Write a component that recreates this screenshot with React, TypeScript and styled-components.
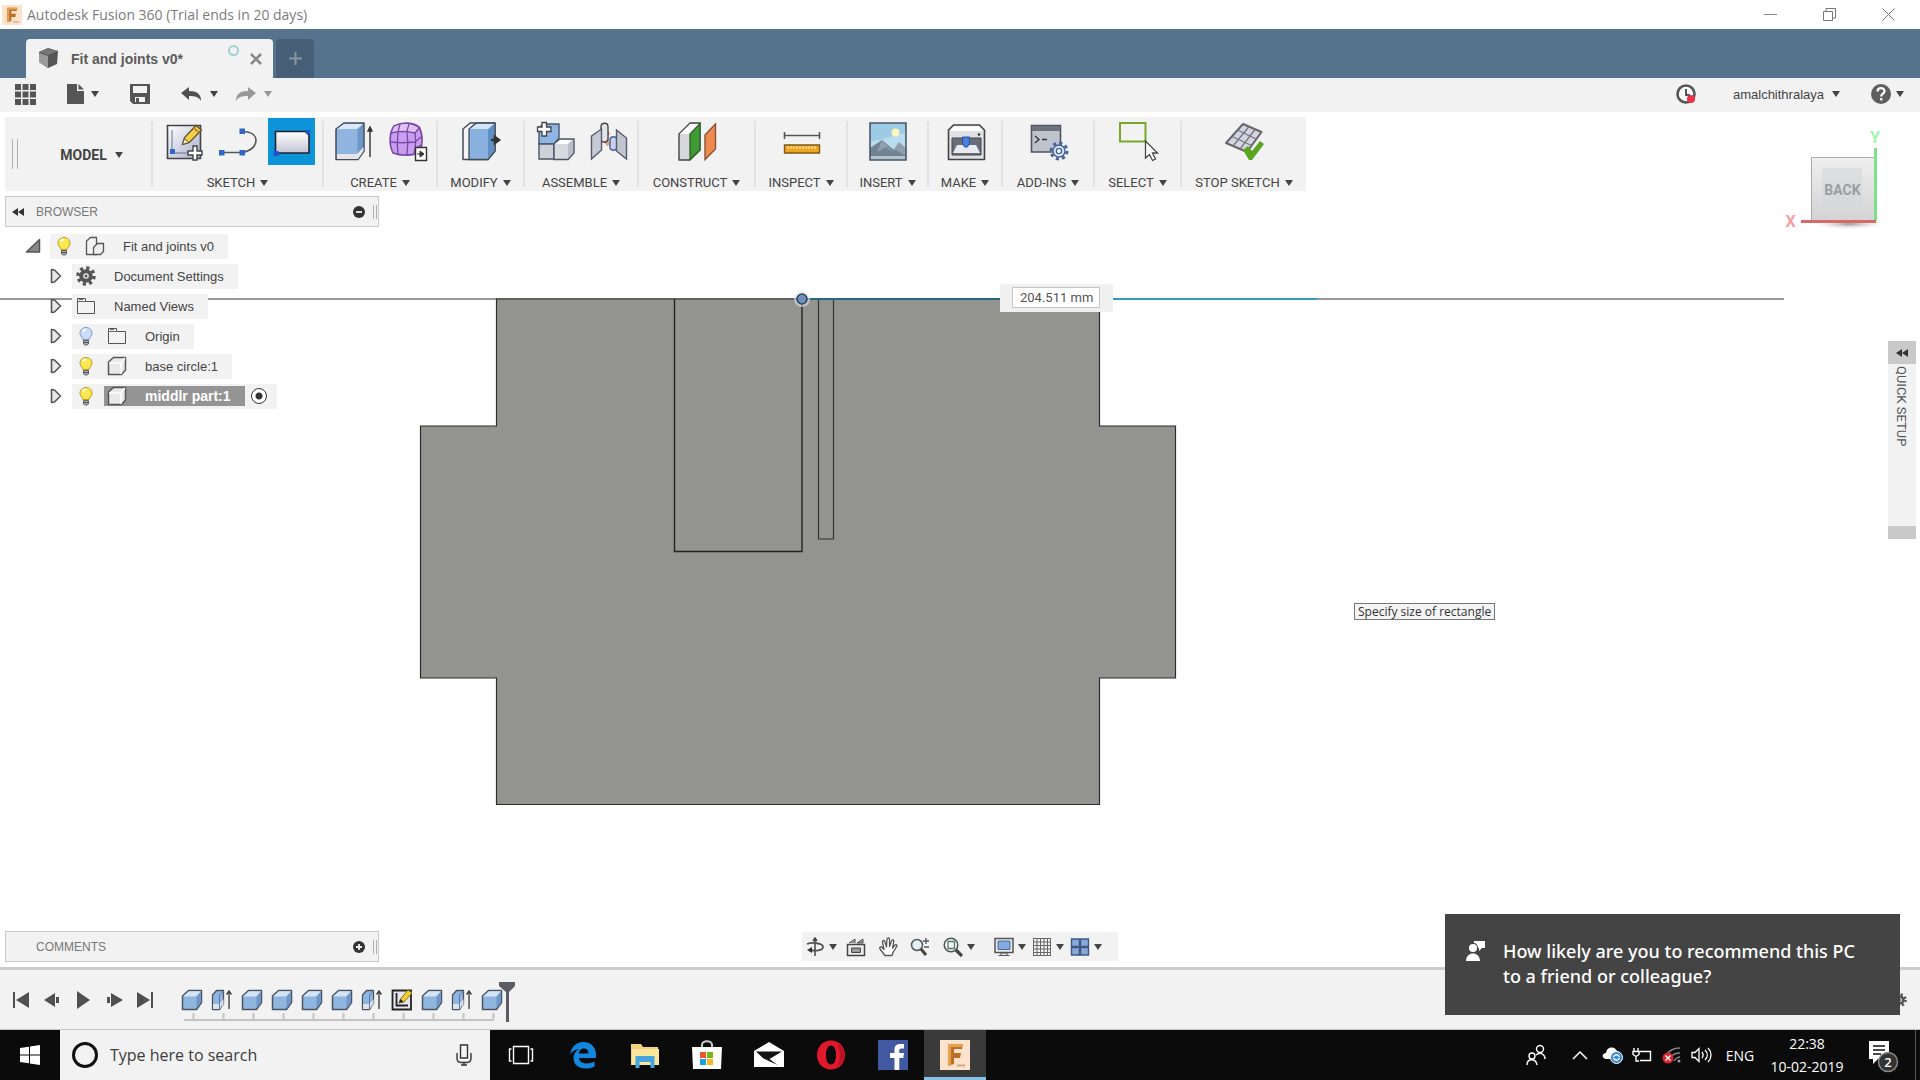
import React from "react";
import styled, { createGlobalStyle, css } from "styled-components";

const ui = `"Liberation Sans", Arial, sans-serif`;
const narrow = `Roboto, "Liberation Sans", sans-serif`;
const system = `"Open Sans", "Noto Sans", sans-serif`;

const Global = createGlobalStyle`
  *, *::before, *::after { box-sizing: border-box; }
  body { margin: 0; background: #fff; font-family: ${ui}; font-size: 13px; color: #444; }
  button, input { font: inherit; color: inherit; }
  ul { list-style: none; margin: 0; padding: 0; }
  svg { display: block; flex: none; }
`;

const Shell = styled.div`
  display: flex;
  flex-direction: column;
  min-height: 100vh;
  position: relative;
  overflow: hidden;
`;

const Plain = styled.button`
  display: flex;
  align-items: center;
  justify-content: center;
  border: 0;
  padding: 0;
  background: none;
  flex: none;
  cursor: pointer;
`;

/* ---------- window frame ---------- */
const TitleBar = styled.header`
  display: flex;
  align-items: center;
  height: 29px;
  padding-left: 2px;
  gap: 5px;
  background: #fff;
  font-family: ${system};
  color: #7c7c7c;
`;
const TitleText = styled.h1`
  margin: 0;
  flex: 1;
  font-size: 14px;
  font-weight: 400;
`;
const WindowButton = styled(Plain)`
  width: 59px;
  height: 28px;
`;
const WindowButtons = styled.div`
  display: flex;
  padding-right: 2px;
`;

const TabBar = styled.nav`
  display: flex;
  align-items: flex-end;
  gap: 3px;
  height: 49px;
  padding-left: 26px;
  background: #55738c;
`;
const Tab = styled.div`
  display: flex;
  align-items: center;
  width: 247px;
  height: 39px;
  padding: 0 10px 0 12px;
  border-radius: 4px 4px 0 0;
  background: #f2f2f2;
`;
const TabName = styled.span`
  flex: 1;
  padding-left: 12px;
  font-size: 14px;
  font-weight: 700;
  color: #5b5b5b;
`;
const SyncDot = styled.span`
  width: 11px;
  height: 11px;
  margin: 0 10px 16px 0;
  border: 2px solid #9fd3d3;
  border-radius: 50%;
`;
const NewTab = styled(Plain)`
  width: 38px;
  height: 39px;
  border-radius: 4px 4px 0 0;
  background: #465f76;
`;

const QuickBar = styled.div`
  display: flex;
  align-items: center;
  height: 34px;
  padding: 0 16px 2px 15px;
  background: #f2f2f2;
`;
const QuickItem = styled(Plain)<{ $gap: number; $inner?: number }>`
  gap: ${(p) => p.$inner ?? 8}px;
  margin-right: ${(p) => p.$gap}px;
  font-size: 13px;
  color: #444;
`;
const Spacer = styled.span`
  flex: 1;
`;

/* ---------- workspace ---------- */
const Workspace = styled.main`
  position: relative;
  display: flex;
  flex: 1;
  flex-direction: column;
  align-items: flex-start;
  padding: 5px;
`;
const Model = styled.svg`
  position: absolute;
  left: 0;
  top: 0;
`;
const Ribbon = styled.div`
  position: relative;
  display: flex;
  height: 74px;
  background: #f2f2f2;
  font-family: ${narrow};
  font-size: 13px;
`;
const ribbonDivider = css`
  &::after {
    content: "";
    width: 2px;
    height: 66px;
    margin: 4px 0;
    background: #e2e2e2;
  }
`;
const ModelSwitch = styled.div`
  display: flex;
  width: 148px;
  align-items: center;
  padding-left: 7px;
  ${ribbonDivider}
`;
const ModelButton = styled(Plain)`
  flex: 1;
  gap: 8px;
  padding: 2px 0 0 14px;
  font-size: 14px;
  font-weight: 700;
`;
const Grip = styled.span<{ $height: number; $gap: number }>`
  width: ${(p) => p.$gap + 2}px;
  height: ${(p) => p.$height}px;
  border: solid #b0b0b0;
  border-width: 0 1px;
`;
const Group = styled.section<{ $width: number }>`
  display: flex;
  width: ${(p) => p.$width}px;
  &:not(:last-child) {
    ${ribbonDivider}
  }
`;
const GroupBody = styled.div`
  display: flex;
  flex: 1;
  flex-direction: column;
  align-items: center;
  gap: 10px;
  padding-top: 1px;
`;
const Tools = styled.div`
  display: flex;
  gap: 7px;
`;
const Tool = styled(Plain)<{ $active?: boolean }>`
  width: 47px;
  height: 47px;
  background: ${(p) => (p.$active ? "#0d94d8" : "transparent")};
`;
const GroupLabel = styled(Plain)`
  gap: 5px;
  white-space: nowrap;
  line-height: 16px;
`;

const PanelBar = styled.div<{ $top?: number }>`
  position: relative;
  display: flex;
  align-items: center;
  width: 374px;
  height: 31px;
  margin-top: ${(p) => p.$top ?? 0}px;
  padding: 0 1px 0 6px;
  border: 1px solid #c9c9c9;
  background: #f2f2f2;
  color: #777;
`;
const PanelName = styled.h2`
  flex: 1;
  margin: 0 0 0 12px;
  font-size: 12px;
  font-weight: 400;
`;
const PanelSlot = styled.span`
  display: flex;
  width: 12px;
`;
const PanelToggle = styled(Plain)`
  margin-right: 8px;
`;

const Tree = styled.ul`
  position: relative;
  padding-top: 4px;
`;
const Row = styled.li<{ $level: number }>`
  display: flex;
  align-items: center;
  gap: ${(p) => (p.$level ? 10 : 9)}px;
  height: 30px;
  padding-left: ${(p) => (p.$level ? 45 : 20)}px;
`;
const RowBox = styled.div`
  display: flex;
  align-items: center;
  height: 25px;
  background: #f2f2f2;
`;
const RowIcon = styled(Plain)`
  width: 28px;
  height: 25px;
`;
const Entry = styled.button<{ $selected?: boolean; $start: number }>`
  display: flex;
  align-items: center;
  gap: 18px;
  height: ${(p) => (p.$selected ? 20 : 25)}px;
  margin-left: ${(p) => (p.$selected ? 4 : 0)}px;
  padding: 0 14px 0 ${(p) => (p.$selected ? 3 : p.$start)}px;
  border: 0;
  background: ${(p) => (p.$selected ? "#949494" : "transparent")};
  color: ${(p) => (p.$selected ? "#fff" : "#444")};
  font-size: ${(p) => (p.$selected ? 14 : 13)}px;
  font-weight: ${(p) => (p.$selected ? 700 : 400)};
  white-space: nowrap;
`;
const Activate = styled.input`
  appearance: none;
  width: 16px;
  height: 16px;
  margin: 0 10px 0 6px;
  border: 1px solid #333;
  border-radius: 50%;
  background: radial-gradient(circle, #333 0 3px, #fff 4px);
`;

const BottomRow = styled.div`
  position: relative;
  display: grid;
  grid-template-columns: 1fr auto 1fr;
  align-items: center;
  width: 100%;
  margin-top: auto;
`;
const NavBar = styled.div`
  display: flex;
  align-items: center;
  height: 29px;
  padding: 0 13px 0 3px;
  background: #f2f2f2;
`;
const NavTool = styled(Plain)<{ $width: number }>`
  width: ${(p) => p.$width}px;
  height: 29px;
  justify-content: flex-start;
  gap: 4px;
`;

/* Widgets that float over the drawing */
const Dimension = styled.label`
  position: absolute;
  left: 1000px;
  top: 172px;
  display: flex;
  padding: 3px 13px 4px 12px;
  background: #f0f0f0;
`;
const DimensionInput = styled.input`
  width: 88px;
  height: 21px;
  padding: 0 0 0 7px;
  border: 1px solid #c4c4c4;
  background: #fff;
  font-family: ${narrow};
  font-size: 13px;
  color: #555;
`;
const Hint = styled.div`
  position: absolute;
  left: 1354px;
  top: 491px;
  height: 17px;
  padding: 0 3px;
  border: 1px solid #777;
  background: #f4f4f4;
  font-family: ${system};
  font-size: 12px;
  line-height: 15px;
  color: #333;
  white-space: nowrap;
`;
const Cube = styled(Plain)`
  position: absolute;
  right: 30px;
  top: 12px;
`;
const QuickSetup = styled.aside`
  position: absolute;
  right: 4px;
  top: 229px;
  display: flex;
  flex-direction: column;
  width: 28px;
  height: 198px;
  border-bottom: 13px solid #c9c9c9;
  background: #f2f2f2;
  font-family: ${narrow};
  font-size: 13px;
  color: #555;
`;
const QuickToggle = styled(Plain)`
  width: 28px;
  height: 23px;
  background: #c9c9c9;
`;
const QuickText = styled.span`
  writing-mode: vertical-rl;
  align-self: center;
  padding: 2px 2px 0 0;
`;

/* ---------- timeline ---------- */
const Timeline = styled.footer`
  display: flex;
  align-items: flex-start;
  height: 63px;
  padding: 0 13px 0 5px;
  border-top: 3px solid #cdcdcd;
  border-bottom: 1px solid #c4c4c4;
  background: #f2f2f2;
`;
const Play = styled(Plain)`
  width: 31px;
  height: 60px;
`;
const Track = styled.div`
  position: relative;
  margin: 16px 0 0 17px;
`;
const Features = styled.div`
  display: flex;
`;
const Feature = styled(Plain)`
  width: 30px;
  height: 27px;
`;
const Marker = styled.svg`
  position: absolute;
  left: 321px;
  top: -4px;
`;
const TimelineSettings = styled(Plain)`
  height: 60px;
`;

/* ---------- taskbar ---------- */
const TaskBar = styled.nav`
  display: flex;
  height: 50px;
  background: #0b0b0b;
  font-family: ${system};
  color: #fff;
`;
const Start = styled(Plain)`
  width: 60px;
`;
const Search = styled.label`
  display: flex;
  align-items: center;
  gap: 11px;
  width: 430px;
  padding: 0 18px 0 11px;
  background: #f2f2f2;
`;
const SearchInput = styled.input`
  flex: 1;
  min-width: 0;
  padding: 0;
  border: 0;
  outline: 0;
  background: none;
  font-size: 16px;
  &::placeholder {
    color: #3c3c3c;
    opacity: 1;
  }
`;
const Task = styled(Plain)<{ $open?: boolean }>`
  width: 62px;
  ${(p) => p.$open && "background: #3a3a3a; box-shadow: inset 0 -3px #83c4ee;"}
`;
const Tray = styled.div`
  display: flex;
  align-items: center;
  margin-left: auto;
  border-right: 1px solid #555;
  margin-right: 4px;
`;
const TrayItem = styled(Plain)<{ $width: number }>`
  width: ${(p) => p.$width}px;
  height: 50px;
  color: #fff;
  font-size: 14px;
`;
const Clock = styled.time`
  width: 92px;
  font-size: 14px;
  line-height: 23px;
  text-align: center;
`;

const Toast = styled.aside`
  position: absolute;
  right: 20px;
  bottom: 65px;
  display: flex;
  align-items: flex-start;
  gap: 16px;
  width: 455px;
  height: 101px;
  padding: 25px 20px;
  background: #444;
  color: #fff;
  font-family: "Noto Sans", "Open Sans", sans-serif;
  line-height: 25px;
`;
const ToastText = styled.p`
  margin: 0;
  font-size: 18px;
  font-weight: 500;
  white-space: nowrap;
`;

/* ---------- icons ---------- */
const Caret = ({ color = "#444" }: { color?: string }) => (
  <svg width="8" height="6" viewBox="0 0 8 6" aria-hidden>
    <path d="M0 0h8L4 6z" fill={color} />
  </svg>
);

type Art = React.ReactNode;
const Svg = ({ w, h = w, children }: { w: number; h?: number; children: Art }) => (
  <svg width={w} height={h} viewBox={`0 0 ${w} ${h}`} fill="none" aria-hidden>
    {children}
  </svg>
);

const FusionLogo = ({ size }: { size: number }) => (
  <svg width={size} height={size} viewBox="0 0 30 30" aria-hidden>
    <path fill="#fde3cb" d="M0 0h30v30H0z" />
    <path fill="#b96f24" d="M8 4h15l-1 5h-8v4h7l-1 5h-6v6l-6 2z" />
    <path fill="#e8a050" d="M8 4h15l-1 3H11v18l-3 1z" />
    <path stroke="#c9a98a" strokeWidth="2" d="M17 25.500h8" />
  </svg>
);

const Bulb = ({ off }: { off?: boolean }) => (
  <Svg w={16} h={20}>
    <path
      d="M8 1.500c-3.600 0-6 2.500-6 5.500 0 2.400 1.500 3.600 2.700 5.500v1h6.600v-1C12.500 10.600 14 9.400 14 7c0-3-2.400-5.500-6-5.500z"
      fill={off ? "#c9dcf8" : "#fbe84e"}
      stroke={off ? "#8298c4" : "#b89a2a"}
    />
    <path d="M5 5.500c.6-1.400 1.800-2 3-2" stroke="#fff" strokeWidth="2" />
    <path d="M5.500 14.500h5v3.500l-1.500 1h-2l-1.500-1z" fill="#aaa" stroke="#666" />
    <path d="M5 16.500h6" stroke="#555" />
  </Svg>
);
const Folder = () => (
  <Svg w={20} h={18}>
    <path d="M1.500 16.500v-15h8v3h9v12z" fill="#f3f3f3" stroke="#555" />
    <path d="M1.500 4.500h8M3 2.500h4" stroke="#666" />
  </Svg>
);
const Body = () => (
  <Svg w={20}>
    <path d="M1.500 6l5-4.500h12V14l-4 4.500h-13z" fill="#e9e9e9" stroke="#555" strokeWidth="1.500" strokeLinejoin="round" />
    <path d="M2 7h12l4-5M14 7v11" stroke="#fff" strokeWidth="1.500" />
  </Svg>
);
const Assembly = () => (
  <Svg w={20}>
    <path d="M1.500 5l4-3.500h6V18.500h-10z" fill="#f3f3f3" stroke="#555" strokeWidth="1.300" strokeLinejoin="round" />
    <path d="M8.500 11.500l4-4h6v8l-3 3h-7z" fill="#eee" stroke="#555" strokeWidth="1.300" strokeLinejoin="round" />
  </Svg>
);
const Gear = ({ size = 20, color = "#555" }: { size?: number; color?: string }) => (
  <svg width={size} height={size} viewBox="0 0 20 20" fill="none" aria-hidden>
    <circle cx="10" cy="10" r="8" stroke={color} strokeWidth="3.500" strokeDasharray="3.140 3.140" />
    <circle cx="10" cy="10" r="4.800" stroke={color} strokeWidth="4" />
    <circle cx="10" cy="10" r="1.500" fill={color} />
  </svg>
);
const Closed = () => (
  <Svg w={12} h={16}>
    <path d="M1.500 1.500v13l3-.5 6-6-6-6z" fill="#e8e8e8" stroke="#555" strokeWidth="1.600" strokeLinejoin="round" />
  </Svg>
);
const Opened = () => (
  <Svg w={16}>
    <path d="M14.500 1.500v12.500H1.500z" fill="#888" stroke="#555" strokeWidth="1.500" strokeLinejoin="round" />
  </Svg>
);
const Rewind = () => (
  <Svg w={12} h={8}>
    <path d="M6 0v8L0 4zM12 0v8L6 4z" fill="#333" />
  </Svg>
);
const Round = ({ plus }: { plus?: boolean }) => (
  <Svg w={12}>
    <circle cx="6" cy="6" r="6" fill="#333" />
    <path d={plus ? "M3 6h6M6 3v6" : "M3 6h6"} stroke="#f2f2f2" strokeWidth="1.800" />
  </Svg>
);

const Box = () => (
  <Svg w={22}>
    <path d="M1.500 7l6-5.500h13v12l-5 7h-14z" fill="#8fb6de" stroke="#4b5363" strokeWidth="1.500" strokeLinejoin="round" />
    <path d="M2 7.500l6-5.300h12l-4.500 5.300z" fill="#d5e4f5" />
    <path d="M15.500 7.500l4.500-5v11l-4.500 6z" fill="#6f98c8" />
  </Svg>
);
const ExtrudeSmall = () => (
  <Svg w={22}>
    <path d="M1.500 6l4-4.500h7v13l-4 6h-7z" fill="#8fb6de" stroke="#4b5363" strokeWidth="1.300" strokeLinejoin="round" />
    <path d="M2 15h6.500l4-5v5l-4 5H2z" fill="#dde3ea" />
    <path d="M8.500 6v14M8.500 6l4-4" stroke="#5c7ba6" />
    <path d="M18 20V3M15.500 5.500L18 2l2.500 3.500" stroke="#444" strokeWidth="1.400" />
  </Svg>
);
const SketchSmall = () => (
  <Svg w={22}>
    <path d="M1.500 1.500h18.500v19H1.500z" fill="#e4e7f2" stroke="#222" strokeWidth="1.800" />
    <path d="M5.500 4v12.500H17" stroke="#222" strokeWidth="1.800" />
    <path d="M8 14l1.500-4L17 1l4 3-8 9z" fill="#f4cf2c" stroke="#8a6d1a" />
    <path d="M8 14l1.500-4 3 2.500z" fill="#222" />
  </Svg>
);

const tools: Record<string, Art> = {
  newSketch: (
    <>
      <defs>
        <linearGradient id="page" x1="0" y1="0" x2="1" y2="1">
          <stop stopColor="#fff" />
          <stop offset="1" stopColor="#a9aecb" />
        </linearGradient>
      </defs>
      <path d="M7.500 7.500h33v33h-33z" fill="url(#page)" stroke="#444" strokeWidth="1.600" />
      <path d="M12 12v21M14 35h14" stroke="#8a90a8" strokeWidth="1.300" />
      <path d="M10 31h5v5h-5z" fill="#2f66c8" />
      <path d="M22.500 26.500l2-7L36 7.500l5.500 4.500-12 12.500z" fill="#f2cf45" stroke="#5f5330" strokeWidth="1.300" />
      <path d="M33.500 10l5.500 4.500" stroke="#c7863c" strokeWidth="2" />
      <path d="M22.500 26.500l2-6 4.500 4z" fill="#f5e6c8" stroke="#5f5330" />
      <path d="M33 28h4v5h5v4h-5v5h-4v-5h-5v-4h5z" fill="#fff" stroke="#444" strokeWidth="1.400" />
    </>
  ),
  line: (
    <>
      <path d="M8 34.500h20c8-1 14-6 14-12s-6-9-14-9" stroke="#555" strokeWidth="1.700" />
      <path d="M5 32h5.500v5.500H5zM25.500 32H31v5.500h-5.500zM25.500 10.500H31V16h-5.500z" fill="#2f66c8" />
    </>
  ),
  rectangle: (
    <>
      <defs>
        <linearGradient id="rect" x2="0" y2="1">
          <stop stopColor="#fff" />
          <stop offset="1" stopColor="#c3c4d2" />
        </linearGradient>
      </defs>
      <path d="M7.500 13.500h30l3.500 3.500v18H7.500z" fill="url(#rect)" stroke="#223" strokeWidth="1.600" />
      <path d="M38 12h4v4h-4zM5.500 33h5v5h-5z" fill="#1e55d6" />
    </>
  ),
  extrude: (
    <>
      <path d="M6 11l8-6h20v28l-6 8.500H6z" fill="#8fb5df" stroke="#444b58" strokeWidth="1.500" strokeLinejoin="round" />
      <path d="M7 11l7-5h19l-6 5z" fill="#d9e8f8" />
      <path d="M27.500 11.500L33 6v27l-5.500 7z" fill="#6c97c9" />
      <path d="M7 36h20l6.500-7v4L28 41H7z" fill="#e4e6ea" />
      <path d="M40 39V11M38 13l2-4 2 4z" stroke="#333" strokeWidth="1.400" fill="#333" />
    </>
  ),
  form: (
    <>
      <path d="M10 8c8-4 18-4 25 1 4 7 4 17 1 25-7 4-19 4-27 1-4-8-4-20 1-27z" fill="#c99df0" stroke="#7a48a4" strokeWidth="1.600" />
      <path d="M10 9c7-4 16-4 24 1l-3 5c-8-2-15-2-23 0z" fill="#e0c2f5" />
      <path d="M7 15c8-2 16-2 24 0l5-6M6 24c8 1 16 1 25 0l6-5M31 15c1 8 1 14-1 21M23 13c1 8 1 16 0 24M14 14c-1 8-1 15 0 23M16 6l-2 8M25 6l-2 7M31 31l6-4" stroke="#7a48a4" strokeWidth="1.300" />
      <path d="M31.500 29.500h11v13h-11z" fill="#fff" stroke="#333" strokeWidth="1.400" />
      <path d="M33 36h4M36 33l4 3-4 3z" fill="#333" stroke="#333" />
    </>
  ),
  pressPull: (
    <>
      <path d="M6 11l7-6h25v28l-7 8.500H6z" fill="#f5f5f7" stroke="#444b58" strokeWidth="1.500" strokeLinejoin="round" />
      <path d="M12 11l7-6h19v28l-7 8.500H12z" fill="#8ab2e0" stroke="#444b58" strokeWidth="1.300" strokeLinejoin="round" />
      <path d="M13 11l7-5h17l-6 5z" fill="#d1e3f7" />
      <path d="M31 11.500L37 6v27l-6 7z" fill="#5f8fc6" />
      <path d="M34 22h5M38 19l4 3-4 3z" fill="#333" stroke="#333" strokeWidth="2.500" />
    </>
  ),
  component: (
    <>
      <path d="M8 10l4-4h16v14l-5 6H8z" fill="#8fb5e6" stroke="#4c5566" strokeWidth="1.400" />
      <path d="M8 26h15v15H8z" fill="#cfd1d8" stroke="#4c5566" strokeWidth="1.400" />
      <path d="M23 26l6-5h14v14l-6 6.500H23z" fill="#d7dae0" stroke="#4c5566" strokeWidth="1.400" />
      <path d="M24 26l5-4h12l-4 4z" fill="#fff" />
      <path d="M37 26v14l5-6V22z" fill="#b9bdc8" />
      <path d="M11 4.500h4.500V9H20v4.500h-4.500V18H11v-4.500H6.500V9H11z" fill="#fff" stroke="#444" strokeWidth="1.300" />
    </>
  ),
  joint: (
    <>
      <path d="M24 14c-4 3-4 10 0 13" stroke="#e9a37c" strokeWidth="4" />
      <path d="M16 9c0-5 7-5 7 0v13c-2 3-6 3-7 0z" fill="#e3e5ea" stroke="#444" strokeWidth="1.400" />
      <path d="M6.500 18l10-7v21l-10 9z" fill="#c7cbd6" stroke="#555b68" strokeWidth="1.400" />
      <path d="M25 21c1-3 6-3 7 0v9c-1 3-6 3-7 0z" fill="#c7d0ef" stroke="#4f5c9a" strokeWidth="1.400" />
      <path d="M31.500 12l10 8v21l-10-8z" fill="#c0c5d1" stroke="#555b68" strokeWidth="1.400" />
    </>
  ),
  plane: (
    <>
      <path d="M6 16L17 5h10v27l-10 10H6z" fill="#d6d7da" stroke="#444" strokeWidth="1.400" strokeLinejoin="round" />
      <path d="M7 16L17 6h9l-9 10z" fill="#fff" />
      <path d="M17 16L27 5.500V32L17 41.500z" fill="#3e9a33" stroke="#2b6425" strokeWidth="1.300" />
      <path d="M32 17L42.500 6v25L32 41.500z" fill="#ee8a4e" stroke="#8a5334" strokeWidth="1.400" />
    </>
  ),
  measure: (
    <>
      <path d="M6.500 17.500h35M6.500 14v7M41.500 14v7" stroke="#555" strokeWidth="1.600" />
      <path d="M6.500 27h35v8h-35z" fill="#f0a51e" stroke="#7d5a1a" strokeWidth="1.400" />
      <path d="M10 31v-3M13 31v-3M16 31v-3M19 31v-3M22 31v-3M25 31v-3M28 31v-3M31 31v-3M34 31v-3M37 31v-3" stroke="#fbe39a" strokeWidth="1.300" />
    </>
  ),
  decal: (
    <>
      <path d="M6 5h36v37H6z" fill="#b9dcee" />
      <path d="M6 5h36v10L6 24z" fill="#9dcbe6" />
      <circle cx="31.500" cy="14.500" r="4" fill="#fdf7bd" />
      <path d="M6 30l12-8 12 10 5-4 7 7v7H6z" fill="#728493" />
      <path d="M18 22l-5 12 9-5 8 6-12-13zM30 31l5-7 7 6v8z" fill="#8fa1ad" />
      <path d="M6 38h36v4H6z" fill="#b6c3c9" />
      <path d="M6 5h36v37H6z" stroke="#4a5a68" strokeWidth="1.600" />
    </>
  ),
  print: (
    <>
      <path d="M6.500 12l5-5h26l5 5v29.500h-36z" fill="#e0e1e4" stroke="#444" strokeWidth="1.600" strokeLinejoin="round" />
      <path d="M8 13l4-4.500h25l4 4.500z" fill="#fff" />
      <circle cx="37" cy="16.500" r="1.300" fill="#333" />
      <path d="M10 20h29v17H10z" fill="#6a6e79" stroke="#444" />
      <path d="M15 27h19l4 8H11z" fill="#e9ebf2" />
      <path d="M20.500 19h7v6l-2 4h-3l-2-4z" fill="#4b7fe0" stroke="#2d4f9e" />
    </>
  ),
  script: (
    <>
      <path d="M6.500 7.500h29V34h-29z" fill="#bfc3cd" stroke="#50545e" strokeWidth="1.600" />
      <path d="M7 8h28v5H7z" fill="#6d717c" />
      <path d="M10 18l4 3.500-4 3.500M17 21.500h5" stroke="#333" strokeWidth="1.400" />
      <circle cx="34" cy="33" r="8" stroke="#44629c" strokeWidth="3" strokeDasharray="3.140 3.140" />
      <circle cx="34" cy="33" r="6" fill="#dbe7fa" stroke="#44629c" strokeWidth="1.400" />
      <circle cx="34" cy="33" r="2.600" fill="#fff" stroke="#44629c" strokeWidth="1.400" />
    </>
  ),
  select: (
    <>
      <path d="M6 5h25.500v18.500H6z" stroke="#77a82c" strokeWidth="2" />
      <path d="M31.500 23v17l4-3.500 3 6 3-1.500-3-6h5z" fill="#fff" stroke="#444" strokeWidth="1.300" />
    </>
  ),
  stop: (
    <>
      <path d="M22 6l18.500 8L26 34 5 25z" fill="#d5d3e6" stroke="#666" strokeWidth="2" strokeLinejoin="round" />
      <path d="M16.500 12l18.500 9M11 18.500l19.500 9M28 8.500L12 28M34 11.500L19 31" stroke="#777" strokeWidth="1.300" />
      <path d="M22 32l5-4 4 5 8-10 4 3-12 16h-3z" fill="#5aa51f" />
    </>
  ),
};

const groups: { label: string; width: number; tools: [string, string][] }[] = [
  { label: "SKETCH", width: 171, tools: [["newSketch", "Create Sketch"], ["line", "Line"], ["rectangle", "Rectangle"]] },
  { label: "CREATE", width: 114, tools: [["extrude", "Extrude"], ["form", "Create Form"]] },
  { label: "MODIFY", width: 87, tools: [["pressPull", "Press Pull"]] },
  { label: "ASSEMBLE", width: 114, tools: [["component", "New Component"], ["joint", "Joint"]] },
  { label: "CONSTRUCT", width: 117, tools: [["plane", "Offset Plane"]] },
  { label: "INSPECT", width: 92, tools: [["measure", "Measure"]] },
  { label: "INSERT", width: 81, tools: [["decal", "Decal"]] },
  { label: "MAKE", width: 74, tools: [["print", "3D Print"]] },
  { label: "ADD-INS", width: 92, tools: [["script", "Scripts and Add-Ins"]] },
  { label: "SELECT", width: 87, tools: [["select", "Select"]] },
  { label: "STOP SKETCH", width: 124, tools: [["stop", "Stop Sketch"]] },
];

const nodes: { name: string; bulb?: "on" | "off"; icon: Art; selected?: boolean }[] = [
  { name: "Document Settings", icon: <Gear /> },
  { name: "Named Views", icon: <Folder /> },
  { name: "Origin", bulb: "off", icon: <Folder /> },
  { name: "base circle:1", bulb: "on", icon: <Body /> },
  { name: "middlr part:1", bulb: "on", icon: <Body />, selected: true },
];

const navTools: { name: string; width: number; caret?: boolean; art: Art }[] = [
  {
    name: "Orbit", width: 41, caret: true,
    art: <><path d="M10 1v18M8 4l2-3 2 3" stroke="#444" strokeWidth="1.500" /><path d="M2 7c5-2 16-1 16 3s-8 4-14 3" stroke="#555" strokeWidth="1.800" /><path d="M2 13l5-3v6z" fill="#333" /></>,
  },
  {
    name: "Look At", width: 32,
    art: <><path d="M1.500 7.500h17v11h-17z" fill="#eee" stroke="#444" strokeWidth="1.500" /><path d="M5.500 11h9v4.500h-9z" fill="#999" stroke="#444" /><path d="M3 6l6-4v4M11 6l6-4v4z" stroke="#555" fill="#999" /></>,
  },
  {
    name: "Pan", width: 32,
    art: <path d="M7 18.500L2 12c-1-2 1-3 2-1.500l2 2L4.500 5c0-2 2-2 2.500 0l1.500 5L9 2.500c0-2 2.500-2 2.500 0v7L13.500 4c.6-1.700 2.600-1.300 2.200.6L14.500 11l2.500-3c1-1 2.500 0 1.700 1.300L15 15.500l-1 3z" fill="#fff" stroke="#555" strokeWidth="1.300" strokeLinejoin="round" />,
  },
  {
    name: "Zoom", width: 33,
    art: <><circle cx="7" cy="8" r="5.500" fill="#e4eef5" stroke="#555" strokeWidth="1.500" /><path d="M11 12l5 6" stroke="#444" strokeWidth="3" /><path d="M13 4h6M16 1v6M14 10h5" stroke="#555" strokeWidth="1.300" /></>,
  },
  {
    name: "Fit", width: 51, caret: true,
    art: <><circle cx="8" cy="8" r="6.800" fill="#f4f4f4" stroke="#555" strokeWidth="1.500" /><path d="M5 4.500h6.500v7H5z" stroke="#4d7f6b" strokeWidth="1.300" /><path d="M13 13l6 6" stroke="#444" strokeWidth="3.200" /></>,
  },
  {
    name: "Display Settings", width: 38, caret: true,
    art: <><path d="M1 1.500h18v14H1z" fill="#eee" stroke="#555" strokeWidth="1.500" /><path d="M4 4h12v8.500H4z" fill="#84abdf" stroke="#4b6a98" /><path d="M7 16h6v2.500H7zM4.500 18.500h11" stroke="#555" /></>,
  },
  {
    name: "Grid and Snaps", width: 38, caret: true,
    art: <><path d="M1.500 1.500h17v17h-17z" fill="#f4f4f4" /><path d="M1.500 1v18M5 1v18M8.500 1v18M12 1v18M15.500 1v18M18.500 1v18M1 1.500h18M1 5h18M1 8.500h18M1 12h18M1 15.500h18M1 18.500h18" stroke="#666" /></>,
  },
  {
    name: "Viewports", width: 35, caret: true,
    art: <path d="M1.500 2h8v7.500h-8zM10.500 2h8v7.500h-8zM1.500 10.500h8V18h-8zM10.500 10.500h8V18h-8z" fill="#86a9dc" stroke="#3f5680" strokeWidth="1.400" />,
  },
];

const playback: [string, string][] = [
  ["Go to beginning", "M1 1h2v16H1zM17 1v16L4 9z"],
  ["Step back", "M12 2v14L1 9zM13 6h3v6h-3z"],
  ["Play", "M3 0l13 9L3 18z"],
  ["Step forward", "M6 2v14l12-7zM2 6h3v6H2z"],
  ["Go to end", "M15 1h2v16h-2zM1 1v16l13-8z"],
];
const features = "bebbbbesbeb".split("");

/* ---------- taskbar icons ---------- */
const taskApps: { name: string; open?: boolean; art: Art }[] = [
  { name: "Task View", art: <Svg w={26}><path d="M5.500 4.500h15v17h-15z" stroke="#fff" strokeWidth="1.400" /><path d="M3.500 7H1.500v12h2M22.500 7h2v12h-2" stroke="#fff" strokeWidth="1.400" /></Svg> },
  {
    name: "Edge",
    art: <Svg w={28}><path d="M1 13.500C2.500 5 8 1 14.500 1 22 1 27 6.500 27 13.500V17H10c.3 4 4 5.500 8 5.500 2.800 0 5.300-.8 7.500-2v5C23 27 20 27.500 17 27.500 9 27.500 4.500 23 4.500 17c0-4 2-7 5.500-9-4.500.5-7.500 2.700-9 5.500zM10 12.500h9.500c0-3-1.500-5-4.500-5s-5 2-5 5z" fill="#1187e0" /></Svg>,
  },
  {
    name: "File Explorer",
    art: <Svg w={28}><path d="M0 3h10l2 3h15v18H0z" fill="#f3d37a" /><path d="M1 8h27v16H1z" fill="#fbe79c" /><path d="M4.500 27V15h19v12h-4v-6h-11v6z" fill="#46a5dc" /></Svg>,
  },
  {
    name: "Microsoft Store",
    art: <Svg w={30}><path d="M10 9V5c0-5 10-5 10 0v4" stroke="#ccc" strokeWidth="2" /><path d="M0 7h30l-1 22H1z" fill="#fff" /><path d="M8 12h6v6H8z" fill="#e8562a" /><path d="M15 12h6v6h-6z" fill="#7cb518" /><path d="M8 19h6v6H8z" fill="#1a9de0" /><path d="M15 19h6v6h-6z" fill="#f5b81d" /></Svg>,
  },
  { name: "Mail", art: <Svg w={30} h={26}><path d="M0 9L15 0l15 9v16H0z" fill="#fff" /><path d="M2 9.500h26L15.500 17l8 6-14-6.500z" fill="#111" /></Svg> },
  {
    name: "Opera",
    art: <Svg w={30}><path d="M15 .5C6.500.5 1 7 1 15s5.500 14.500 14 14.500S29 23 29 15 23.500.5 15 .5zm0 5c3.500 0 5 4.500 5 9.500s-1.500 9.500-5 9.500-5-4.500-5-9.500 1.500-9.500 5-9.500z" fill="#e0182c" fillRule="evenodd" /><path d="M21 4c4 6 4 16 0 22 10-4 10-18 0-22z" fill="#b81224" /></Svg>,
  },
  {
    name: "Facebook",
    art: <Svg w={30}><path d="M0 0h30v30H0z" fill="#4159a0" /><path d="M16.500 30V18H12v-5h4.500V9.500c0-4 2.500-5.500 6-5.500H26v4.500h-2.500c-1.800 0-2.300.8-2.300 2.300V13H26l-.7 5h-4v12z" fill="#fff" /></Svg>,
  },
  { name: "Autodesk Fusion 360", open: true, art: <FusionLogo size={30} /> },
];

const trayIcons: { name: string; width: number; art: Art }[] = [
  { name: "People", width: 50, art: <Svg w={20} h={22}><circle cx="14" cy="5" r="3.500" stroke="#fff" strokeWidth="1.400" /><circle cx="6" cy="12" r="3" stroke="#fff" strokeWidth="1.400" /><path d="M1 21c0-7 9-7 10 0M10 11c5-4 9 0 9 4" stroke="#fff" strokeWidth="1.400" /></Svg> },
  { name: "Show hidden icons", width: 38, art: <Svg w={16} h={10}><path d="M1 9l7-7 7 7" stroke="#fff" strokeWidth="1.500" /></Svg> },
  { name: "OneDrive", width: 26, art: <Svg w={21} h={18}><path d="M4 13c-5-1-4-6 0-6 1-7 9-7 11-2 5 0 5 8 1 8z" fill="#fff" /><circle cx="14.500" cy="11.500" r="6" fill="#3b8bd8" stroke="#fff" /><path d="M11.500 11c1-3 5-3 6 0M17.500 12c-1 3-5 3-6 0" stroke="#fff" strokeWidth="1.300" /></Svg> },
  { name: "Power", width: 33, art: <Svg w={20} h={16}><path d="M6 4.500h12.500v9H8M2 1v3M6 1v3M1 4.500h6v3l-3 2-3-2zM4 9v5h3" stroke="#fff" strokeWidth="1.400" /></Svg> },
  { name: "Network unavailable", width: 27, art: <Svg w={20} h={18}><path d="M5 8C8 4 13 2 18 2M8 12c2-3 6-5 10-5M12 15c1-2 4-4 6-4" stroke="#888" strokeWidth="1.500" /><circle cx="17" cy="15" r="1.500" fill="#999" /><circle cx="6" cy="12" r="5.500" fill="#d8262e" /><path d="M3.500 9.500l5 5M8.500 9.500l-5 5" stroke="#fff" strokeWidth="1.400" /></Svg> },
  { name: "Volume", width: 34, art: <Svg w={22} h={18}><path d="M1 6.500h3l4-4v13l-4-4H1z" stroke="#fff" strokeWidth="1.300" /><path d="M11 6c1.500 2 1.500 4 0 6M14 4c3 3 3 7 0 10M17 2c4 4 4 10 0 14" stroke="#fff" strokeWidth="1.300" /></Svg> },
];

export default function App() {
  return (
    <Shell>
      <Global />
      <TitleBar>
        <FusionLogo size={20} />
        <TitleText>Autodesk Fusion 360 (Trial ends in 20 days)</TitleText>
        <WindowButtons>
          <WindowButton aria-label="Minimize"><Svg w={13}><path d="M0 6.500h13" stroke="#888" /></Svg></WindowButton>
          <WindowButton aria-label="Restore"><Svg w={13}><path d="M.5 3.500h9v9h-9zM3 3V.5h9.500V10H10" stroke="#777" /></Svg></WindowButton>
          <WindowButton aria-label="Close"><Svg w={13}><path d="M.5.5l12 12M12.500.5l-12 12" stroke="#777" /></Svg></WindowButton>
        </WindowButtons>
      </TitleBar>

      <TabBar>
        <Tab>
          <Svg w={21}>
            <path d="M1 4l9-4 10 3-1 13-9 4-9-6z" fill="#555" />
            <path d="M1 5l9 3v12l-9-6z" fill="#9b9b9b" />
            <path d="M1 4l9-3 10 2-10 4z" fill="#777" />
          </Svg>
          <TabName>Fit and joints v0*</TabName>
          <SyncDot />
          <Plain aria-label="Close tab"><Svg w={14}><path d="M2 2l10 10M12 2L2 12" stroke="#888" strokeWidth="2.600" /></Svg></Plain>
        </Tab>
        <NewTab aria-label="New tab"><Svg w={13}><path d="M6.500 0v13M0 6.500h13" stroke="#8797a6" strokeWidth="2" /></Svg></NewTab>
      </TabBar>

      <QuickBar>
        <QuickItem $gap={31} aria-label="Data panel">
          <Svg w={21}><path d="M0 0h6v6H0zM7.500 0h6v6h-6zM15 0h6v6h-6zM0 7.500h6v6H0zM7.500 7.500h6v6h-6zM15 7.500h6v6h-6zM0 15h6v6H0zM7.500 15h6v6h-6zM15 15h6v6h-6z" fill="#555" /></Svg>
        </QuickItem>
        <QuickItem $gap={31} $inner={7} aria-label="File">
          <Svg w={17} h={20}><path d="M0 0h10v7h7v13H0zM11.500 0L17 5.500h-5.500z" fill="#555" /></Svg>
          <Caret />
        </QuickItem>
        <QuickItem $gap={31} aria-label="Save">
          <Svg w={20}><path d="M0 0h20v20H3l-3-3z" fill="#555" /><path d="M3 2h14v7H3zM5 13h10v5H5z" fill="#f2f2f2" /><path d="M6 14h3v4H6z" fill="#555" /></Svg>
        </QuickItem>
        <QuickItem $gap={17} aria-label="Undo">
          <Svg w={21} h={16}><path d="M0 7l8-6v4c8 0 12 3 12 10-2-4-6-5-12-5v4z" fill="#505050" /></Svg>
          <Caret />
        </QuickItem>
        <QuickItem $gap={0} aria-label="Redo">
          <Svg w={21} h={16}><path d="M21 7l-8-6v4C5 5 1 8 1 15c2-4 6-5 12-5v4z" fill="#999" /></Svg>
          <Caret color="#999" />
        </QuickItem>
        <Spacer />
        <QuickItem $gap={36} aria-label="Job status">
          <Svg w={21}><circle cx="10" cy="10" r="8.500" fill="#fff" stroke="#555" strokeWidth="2.600" /><path d="M10 5v6h4" stroke="#555" strokeWidth="2" /><circle cx="15" cy="15" r="4" fill="#ee3344" /></Svg>
        </QuickItem>
        <QuickItem $gap={31}>amalchithralaya <Caret /></QuickItem>
        <QuickItem $gap={0} $inner={5} aria-label="Help">
          <Svg w={20}><circle cx="10" cy="10" r="10" fill="#5e5e5e" /><path d="M6.500 7.500c0-4.500 7-4.500 7-.3 0 2.500-3.300 2.500-3.300 5.300M10.200 14v2.400" stroke="#fff" strokeWidth="2.300" /></Svg>
          <Caret />
        </QuickItem>
      </QuickBar>

      <Workspace>
        <Model width="1800" height="720" viewBox="0 112 1800 720" fill="none" aria-label="Sketch geometry">
          <path d="M0 299h1784" stroke="#999" strokeWidth="2" />
          <path d="M496.500 299h603v127h76v252h-76v126.500h-603V678h-76V426h76z" fill="#93948f" stroke="#2b2b2b" strokeWidth="1.200" />
          <path d="M497 299h305" stroke="#5f6463" strokeWidth="2" />
          <path d="M674.500 299v252.500h127.500V299" stroke="#222" strokeWidth="1.400" />
          <path d="M818.500 299v240h15V299" stroke="#333" strokeWidth="1.200" />
          <path d="M802 299h298" stroke="#27697c" strokeWidth="2" />
          <path d="M1100 299h217" stroke="#3398c4" strokeWidth="2" />
          <circle cx="802" cy="299" r="8" fill="#dfe6ea" opacity=".6" />
          <circle cx="802" cy="299" r="5" fill="#6c8fbd" stroke="#33455e" strokeWidth="1.600" />
        </Model>

        <Ribbon>
          <ModelSwitch>
            <Grip $height={30} $gap={4} />
            <ModelButton>MODEL <Caret /></ModelButton>
          </ModelSwitch>
          {groups.map((g) => (
            <Group key={g.label} $width={g.width}>
              <GroupBody>
                <Tools>
                  {g.tools.map(([id, name]) => (
                    <Tool key={id} aria-label={name} $active={id === "rectangle"}>
                      <Svg w={47}>{tools[id]}</Svg>
                    </Tool>
                  ))}
                </Tools>
                <GroupLabel>{g.label} <Caret /></GroupLabel>
              </GroupBody>
            </Group>
          ))}
        </Ribbon>

        <PanelBar $top={5}>
          <PanelSlot><Rewind /></PanelSlot>
          <PanelName>BROWSER</PanelName>
          <PanelToggle aria-label="Collapse browser"><Round /></PanelToggle>
          <Grip $height={14} $gap={2} />
        </PanelBar>

        <Tree>
          <Row $level={0}>
            <Plain aria-label="Collapse"><Opened /></Plain>
            <RowBox>
              <RowIcon aria-label="Hide"><Bulb /></RowIcon>
              <Entry $start={7}><Assembly />Fit and joints v0</Entry>
            </RowBox>
          </Row>
          {nodes.map((n) => (
            <Row key={n.name} $level={1}>
              <Plain aria-label="Expand"><Closed /></Plain>
              <RowBox>
                {n.bulb && <RowIcon aria-label="Visibility"><Bulb off={n.bulb === "off"} /></RowIcon>}
                <Entry $selected={n.selected} $start={n.bulb ? 7 : 4}>{n.icon}{n.name}</Entry>
                {n.selected && <Activate type="radio" name="active" aria-label="Activate component" defaultChecked />}
              </RowBox>
            </Row>
          ))}
        </Tree>

        <BottomRow>
          <PanelBar>
            <PanelSlot />
            <PanelName>COMMENTS</PanelName>
            <PanelToggle aria-label="Add comment"><Round plus /></PanelToggle>
            <Grip $height={14} $gap={2} />
          </PanelBar>
          <NavBar>
            {navTools.map((t) => (
              <NavTool key={t.name} $width={t.width} aria-label={t.name}>
                <Svg w={20}>{t.art}</Svg>
                {t.caret && <Caret />}
              </NavTool>
            ))}
          </NavBar>
          <span />
        </BottomRow>

        <Dimension>
          <DimensionInput aria-label="Length" defaultValue="204.511 mm" />
        </Dimension>
        <Hint role="tooltip">Specify size of rectangle</Hint>
        <Cube aria-label="View cube, back">
          <svg width="110" height="110" viewBox="1780 124 110 110" fill="none">
            <defs>
              <linearGradient id="cube" x2="0" y2="1">
                <stop stopColor="#efefef" />
                <stop offset="1" stopColor="#d3d3d5" />
              </linearGradient>
              <radialGradient id="shade">
                <stop stopColor="#999" />
                <stop offset="1" stopColor="#fff" stopOpacity="0" />
              </radialGradient>
            </defs>
            <ellipse cx="1849" cy="224" rx="40" ry="6" fill="url(#shade)" />
            <path d="M1811.500 157.500h63v63h-63z" fill="url(#cube)" stroke="#aaa" />
            <path d="M1822 168h40v40h-40z" fill="#d5d7da" opacity=".6" />
            <path d="M1875.500 148v73" stroke="#7fe08c" strokeWidth="3" />
            <path d="M1801 221.500h75" stroke="#d66a6a" strokeWidth="3" />
            <text x="1842.500" y="195" textAnchor="middle" fontFamily="Liberation Sans Narrow, Roboto, sans-serif" fontWeight="700" fontSize="14" fill="#9a9da2">BACK</text>
            <text x="1790.500" y="227" textAnchor="middle" fontFamily="Roboto, sans-serif" fontWeight="700" fontSize="16" fill="#f5a0a0">X</text>
            <text x="1875" y="143" textAnchor="middle" fontFamily="Roboto, sans-serif" fontWeight="700" fontSize="16" fill="#a0f5ac">Y</text>
          </svg>
        </Cube>
        <QuickSetup>
          <QuickToggle aria-label="Expand quick setup"><Rewind /></QuickToggle>
          <QuickText>QUICK SETUP</QuickText>
        </QuickSetup>
      </Workspace>

      <Timeline>
        {playback.map(([name, d]) => (
          <Play key={name} aria-label={name}><Svg w={18}><path d={d} fill="#505050" /></Svg></Play>
        ))}
        <Track>
          <Features>
            {features.map((f, i) => (
              <Feature key={i} aria-label={`Feature ${i + 1}`}>
                {f === "b" ? <Box /> : f === "e" ? <ExtrudeSmall /> : <SketchSmall />}
              </Feature>
            ))}
          </Features>
          <Svg w={330} h={8}>
            <path d="M7 7h310" stroke="#c4c4c4" strokeWidth="2" />
            <path d={features.map((_, i) => `M${16.5 + i * 30} 0v6`).join("")} stroke="#c4c4c4" strokeWidth="2" />
          </Svg>
          <Marker width="18" height="40" viewBox="0 0 18 40">
            <path d="M1 0h16v4l-6 6v30H8V10L1 4z" fill="#5c5c64" />
          </Marker>
        </Track>
        <Spacer />
        <TimelineSettings aria-label="Timeline settings"><Gear size={14} /></TimelineSettings>
      </Timeline>

      <TaskBar>
        <Start aria-label="Start"><Svg w={20}><path d="M0 3l9-1.300V9.500H0zM10 1.500L20 0v9.500H10zM0 10.500h9v7.800L0 17zM10 10.500h10V20l-10-1.500z" fill="#fff" /></Svg></Start>
        <Search>
          <Svg w={28}><circle cx="14" cy="14" r="11.500" stroke="#111" strokeWidth="3" /></Svg>
          <SearchInput type="text" aria-label="Search" placeholder="Type here to search" />
          <Svg w={16} h={22}><path d="M4.500 1h7v13h-7z" stroke="#333" strokeWidth="1.400" /><path d="M1 9v5c0 3 2 4.500 4 4.500h6c2 0 4-1.500 4-4.500V9M8 18.500V21M5 21h6" stroke="#333" strokeWidth="1.400" /></Svg>
        </Search>
        {taskApps.map((a) => (
          <Task key={a.name} aria-label={a.name} $open={a.open}>{a.art}</Task>
        ))}
        <Tray>
          {trayIcons.map((t) => (
            <TrayItem key={t.name} $width={t.width} aria-label={t.name}>{t.art}</TrayItem>
          ))}
          <TrayItem $width={42}>ENG</TrayItem>
          <Clock>22:38<br />10-02-2019</Clock>
          <TrayItem $width={62} aria-label="2 notifications">
            <svg width="32" height="36" viewBox="0 0 32 36" fill="none">
              <path d="M1 4h20v18H10l-5 5v-5H1z" fill="#fff" />
              <path d="M5 9h12M5 13h12M5 17h8" stroke="#111" strokeWidth="1.500" />
              <circle cx="20" cy="25" r="9.500" fill="#333" stroke="#888" strokeWidth="1.500" />
              <text x="20" y="30" textAnchor="middle" fontFamily="Open Sans, sans-serif" fontWeight="600" fontSize="13" fill="#fff">2</text>
            </svg>
          </TrayItem>
        </Tray>
      </TaskBar>

      <Toast role="status">
        <Svg w={22} h={24}><circle cx="8" cy="9" r="4" fill="#fff" /><path d="M1 22c0-10 14-10 14 0zM9 2h11v7h-3l-3 3V9h-1c0-3-2-5-4-5z" fill="#fff" /></Svg>
        <ToastText>How likely are you to recommend this PC<br />to a friend or colleague?</ToastText>
      </Toast>
    </Shell>
  );
}
